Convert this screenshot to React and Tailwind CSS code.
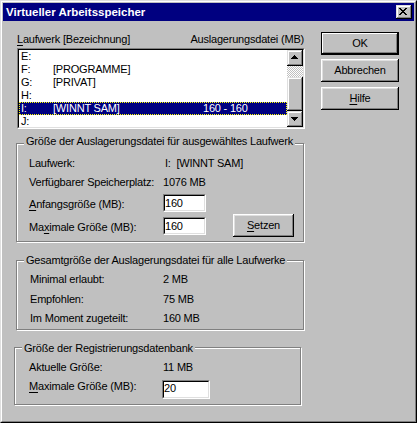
import React from 'react';

const drives = [
  { letter: 'E:', label: '', size: '' },
  { letter: 'F:', label: '[PROGRAMME]', size: '' },
  { letter: 'G:', label: '[PRIVAT]', size: '' },
  { letter: 'H:', label: '', size: '' },
  { letter: 'I:', label: '[WINNT SAM]', size: '160 - 160', selected: true },
  { letter: 'J:', label: '', size: '' },
];

// pixel rows of the little caption "X"
const closeGlyph = [
  [0, 0, 2], [6, 0, 2], [1, 1, 2], [5, 1, 2], [2, 2, 4], [3, 3, 2],
  [2, 4, 4], [1, 5, 2], [5, 5, 2], [0, 6, 2], [6, 6, 2],
];

function Arrow({ down }) {
  const rows = down
    ? [[0, 0, 7], [1, 1, 5], [2, 2, 3], [3, 3, 1]]
    : [[3, 0, 1], [2, 1, 3], [1, 2, 5], [0, 3, 7]];
  return (
    <svg width="7" height="4" viewBox="0 0 7 4" shapeRendering="crispEdges">
      {rows.map(([x, y, w]) => (
        <rect key={y} x={x} y={y} width={w} height="1" fill="#000" />
      ))}
    </svg>
  );
}

function Mn({ children }) {
  return <u className="underline underline-offset-[2px]">{children}</u>;
}

function Button({ children, primary, className = '' }) {
  return (
    <div
      className={`box-border flex items-center justify-center bg-[#c0c0c0] ${
        primary
          ? 'border border-black shadow-[inset_-1px_-1px_0_#000,inset_1px_1px_0_#fff,inset_-2px_-2px_0_#808080]'
          : 'shadow-[inset_-1px_-1px_0_#000,inset_1px_1px_0_#fff,inset_-2px_-2px_0_#808080,inset_2px_2px_0_#dfdfdf]'
      } ${className}`}
    >
      {children}
    </div>
  );
}

function ScrollButton({ down }) {
  return (
    <div className="flex h-[16px] w-[16px] items-center justify-center bg-[#c0c0c0] pb-[1px] pr-[1px] shadow-[inset_-1px_-1px_0_#000,inset_1px_1px_0_#dfdfdf,inset_-2px_-2px_0_#808080,inset_2px_2px_0_#fff]">
      <Arrow down={down} />
    </div>
  );
}

function Edit({ value, className = '', innerClass = '' }) {
  return (
    <div className={`box-border border border-t-[#808080] border-l-[#808080] border-r-white border-b-white ${className}`}>
      <div className={`box-border flex h-full border border-t-black border-l-black border-r-[#dfdfdf] border-b-[#dfdfdf] bg-white ${innerClass}`}>
        {value}
      </div>
    </div>
  );
}

function GroupBox({ title, titleClass, className = '', children }) {
  return (
    <div className={`relative box-border border border-[#808080] shadow-[inset_1px_1px_0_#fff,1px_1px_0_#fff] ${className}`}>
      <span className={`absolute left-[7px] whitespace-nowrap bg-[#c0c0c0] px-[2px] leading-[13px] ${titleClass}`}>
        {title}
      </span>
      {children}
    </div>
  );
}

export default function App() {
  return (
    <div className="box-border h-[423px] w-[417px] border border-t-[#dfdfdf] border-l-[#dfdfdf] border-r-black border-b-black bg-[#c0c0c0] font-['Liberation_Sans',Arial,sans-serif] text-[11px] leading-[13px] tracking-[-0.2px] text-black">
      <div className="box-border flex h-full flex-col border border-t-white border-l-white border-r-[#808080] border-b-[#808080] p-[1px]">
        {/* Title bar */}
        <div className="flex h-[18px] shrink-0 items-center justify-between bg-[#000080] pl-[3px] pr-[2px]">
          <span className="text-[11.5px] font-bold tracking-normal text-white">Virtueller Arbeitsspeicher</span>
          <div className="flex h-[14px] w-[16px] items-center justify-center pb-[1px] pr-[2px] shadow-[inset_-1px_-1px_0_#000,inset_1px_1px_0_#dfdfdf,inset_-2px_-2px_0_#808080,inset_2px_2px_0_#fff] bg-[#c0c0c0]">
            <svg width="8" height="7" viewBox="0 0 8 7" shapeRendering="crispEdges">
              {closeGlyph.map(([x, y, w]) => (
                <rect key={`${x}-${y}`} x={x} y={y} width={w} height="1" fill="#000" />
              ))}
            </svg>
          </div>
        </div>

        {/* Client area */}
        <div className="flex flex-1">
          <div className="ml-[13px] flex w-[289px] flex-col pt-[12px]">
            <div className="ml-[1px] flex h-[13px] w-[287px] justify-between">
              <span><Mn>L</Mn>aufwerk [Bezeichnung]</span>
              <span>Auslagerungsdatei (MB)</span>
            </div>

            {/* Drive list */}
            <div className="ml-[1px] mt-[2px] box-border h-[81px] w-[288px] border border-t-[#808080] border-l-[#808080] border-r-white border-b-white">
              <div className="box-border flex h-full border border-t-black border-l-black border-r-[#dfdfdf] border-b-[#dfdfdf] bg-white">
                <div className="flex-1">
                  {drives.map((d) => (
                    <div
                      key={d.letter}
                      className={`box-border flex h-[13px] border pl-[1px] leading-[11px] ${
                        d.selected
                          ? 'border-dotted border-[#ffff00] bg-[#000080] text-white'
                          : 'border-transparent'
                      }`}
                    >
                      <span className="w-[32px]">{d.letter}</span>
                      <span className="w-[150px]">{d.label}</span>
                      <span>{d.size}</span>
                    </div>
                  ))}
                </div>
                <div className="flex w-[16px] flex-col">
                  <ScrollButton />
                  <div className="h-[11px] bg-[image:repeating-conic-gradient(#c0c0c0_0%_25%,#ffffff_0%_50%)] bg-[length:2px_2px]" />
                  <div className="h-[35px] bg-[#c0c0c0] shadow-[inset_-1px_-1px_0_#000,inset_1px_1px_0_#dfdfdf,inset_-2px_-2px_0_#808080,inset_2px_2px_0_#fff]" />
                  <ScrollButton down />
                </div>
              </div>
            </div>

            {/* Selected drive */}
            <GroupBox
              title="Größe der Auslagerungsdatei für ausgewähltes Laufwerk"
              titleClass="top-[-9px]"
              className="mt-[14px] h-[99px] w-[288px] pl-[12px] pt-[13px]"
            >
              <div className="flex h-[13px]">
                <span className="w-[134px]">Laufwerk:</span>
                <span className="ml-[2px] whitespace-pre">I:  [WINNT SAM]</span>
              </div>
              <div className="mt-[6px] flex h-[13px]">
                <span className="w-[134px]">Verfügbarer Speicherplatz:</span>
                <span>1076 MB</span>
              </div>
              <div className="mt-[5px] flex">
                <span className="mt-[4px] w-[134px]"><Mn>A</Mn>nfangsgröße (MB):</span>
                <Edit value="160" className="h-[18px] w-[43px]" innerClass="pt-[1px]" />
              </div>
              <div className="mt-[5px] flex items-start">
                <span className="mt-[4px] w-[134px]">Ma<Mn>x</Mn>imale Größe (MB):</span>
                <Edit value="160" className="h-[18px] w-[43px]" innerClass="pt-[1px]" />
                <Button className="-mt-[3px] ml-[27px] h-[23px] w-[61px]"><span><Mn>S</Mn>etzen</span></Button>
              </div>
            </GroupBox>

            {/* Totals */}
            <GroupBox
              title="Gesamtgröße der Auslagerungsdatei für alle Laufwerke"
              titleClass="top-[-7px]"
              className="mt-[18px] h-[70px] w-[288px] pl-[13px] pt-[12px]"
            >
              <div className="flex h-[13px]">
                <span className="w-[133px]">Minimal erlaubt:</span>
                <span>2 MB</span>
              </div>
              <div className="mt-[7px] flex h-[13px]">
                <span className="w-[133px]">Empfohlen:</span>
                <span>75 MB</span>
              </div>
              <div className="mt-[6px] flex h-[13px]">
                <span className="w-[133px]">Im Moment zugeteilt:</span>
                <span>160 MB</span>
              </div>
            </GroupBox>

            {/* Registry */}
            <GroupBox
              title="Größe der Registrierungsdatenbank"
              titleClass="top-[-6px]"
              className="-ml-[2px] mt-[17px] h-[58px] w-[287px] pl-[14px] pt-[13px]"
            >
              <div className="flex h-[13px]">
                <span className="w-[134px]">Aktuelle Größe:</span>
                <span>11 MB</span>
              </div>
              <div className="mt-[6px] flex">
                <span className="w-[133px]"><Mn>M</Mn>aximale Größe (MB):</span>
                <Edit value="20" className="h-[19px] w-[48px]" />
              </div>
            </GroupBox>
          </div>

          {/* Buttons */}
          <div className="ml-[16px] flex flex-col pt-[11px]">
            <Button primary className="h-[23px] w-[78px]">OK</Button>
            <Button className="mt-[4px] h-[23px] w-[78px]">Abbrechen</Button>
            <Button className="mt-[5px] h-[23px] w-[78px]"><span><Mn>H</Mn>ilfe</span></Button>
          </div>
        </div>
      </div>
    </div>
  );
}
